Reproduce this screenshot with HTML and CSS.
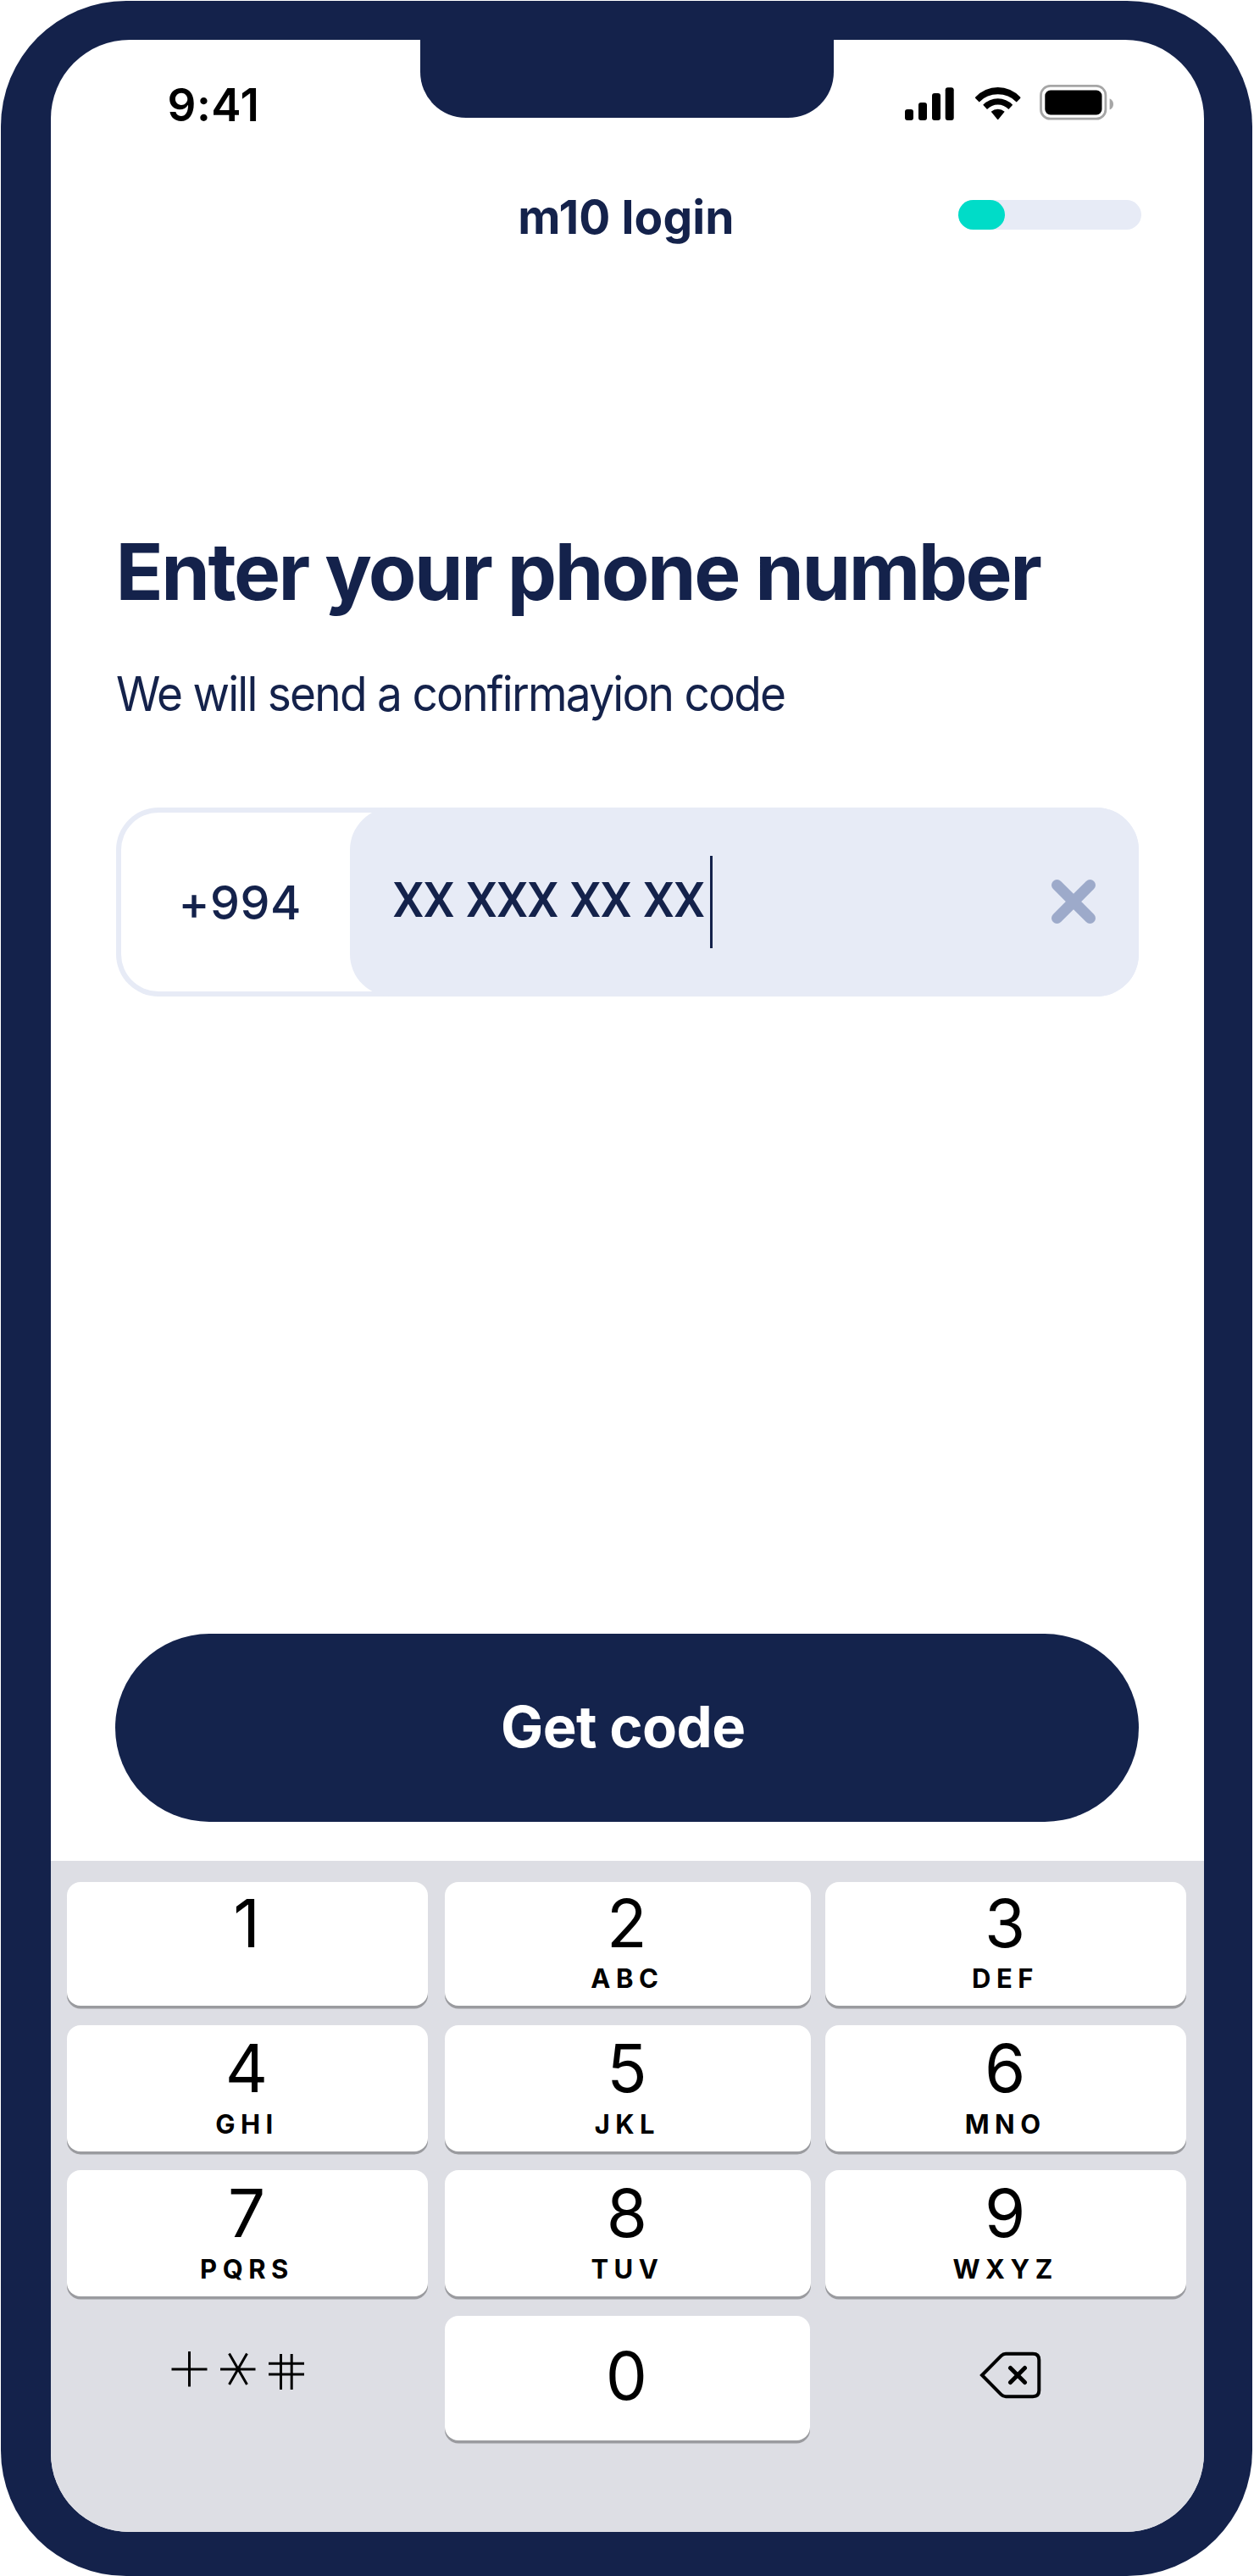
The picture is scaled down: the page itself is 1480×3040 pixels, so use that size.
FILE: index.html
```html
<!DOCTYPE html>
<html lang="en">
<head>
<meta charset="utf-8">
<title>m10 login</title>
<link rel="stylesheet" href="styles.css">
</head>
<body>
<div class="phone">
  <main class="screen">
    <div class="notch"></div>

    <div class="status-bar">
      <span class="time">9:41</span>
      <svg class="status-icons" width="248" height="44" viewBox="0 0 248 44">
        <g>
          <rect x="1" y="30" width="10" height="13" rx="3"/>
          <rect x="17" y="22" width="10" height="21" rx="3"/>
          <rect x="33" y="11" width="10" height="32" rx="3"/>
          <rect x="48.7" y="4.3" width="10" height="38.7" rx="3"/>
        </g>
        <g transform="translate(83.7 4)">
          <path d="M0.6 11.6A35.8 35.8 0 0 1 53.4 11.6Q54 12.2 53.5 12.9L49 17.4A31 31 0 0 0 5 17.4L0.5 12.9Q0 12.2 0.6 11.6Z"/>
          <path d="M9.5 20.7A24.5 24.5 0 0 1 44.5 20.7L39.7 26A17.6 17.6 0 0 0 14.3 26Z"/>
          <path d="M19 28.7A12.6 12.6 0 0 1 35 28.7L27.7 37.7Q27 38.6 26.3 37.7Z"/>
        </g>
        <rect x="161.5" y="2.4" width="76.4" height="38.8" rx="11" fill="none" stroke="#a6a6a6" stroke-width="2.8"/>
        <rect x="166.3" y="7.6" width="67.2" height="28.8" rx="6.5"/>
        <path d="M242.6 17.2Q247 19.4 247 23.9T242.6 30.6Z" fill="#a6a6a6"/>
      </svg>
    </div>

    <header class="header">
      <h2 class="title">m10 login</h2>
      <div class="progress"><div class="progress-fill"></div></div>
    </header>

    <section class="form">
      <h1 class="heading">Enter your phone number</h1>
      <p class="hint">We will send a confirmayion code</p>
      <div class="phone-field">
        <span class="prefix">+994</span>
        <div class="number">
          <span class="digits">XX XXX XX XX</span>
          <span class="caret"></span>
          <svg class="clear" width="54" height="54" viewBox="0 0 54 54">
            <path d="M7.5 7.5L46.5 46.5M46.5 7.5L7.5 46.5" fill="none" stroke="#9daaca" stroke-width="13" stroke-linecap="round"/>
          </svg>
        </div>
      </div>
    </section>

    <button class="submit">Get code</button>

    <div class="keypad">
      <div class="key"><b>1</b></div>
      <div class="key"><b>2</b><i>ABC</i></div>
      <div class="key"><b>3</b><i>DEF</i></div>
      <div class="key"><b>4</b><i>GHI</i></div>
      <div class="key"><b>5</b><i>JKL</i></div>
      <div class="key"><b>6</b><i>MNO</i></div>
      <div class="key"><b>7</b><i>PQRS</i></div>
      <div class="key"><b>8</b><i>TUV</i></div>
      <div class="key"><b>9</b><i>WXYZ</i></div>
      <div class="blank symbols">
        <svg width="158" height="48" viewBox="0 0 158 48" fill="none" stroke="#000" stroke-width="3">
          <path d="M0.5 23H42.5M21.5 2V43.5"/>
          <path d="M58 23H99.5M68.5 4.5L89.5 41M89.5 4.5L68.5 41"/>
          <path d="M115 16.3H157M115 29H157M129.5 5V47M142.2 5V47"/>
        </svg>
      </div>
      <div class="key zero"><b>0</b></div>
      <div class="blank erase">
        <svg width="73" height="56" viewBox="0 0 73 56" fill="none" stroke="#000">
          <path d="M3 28L25.6 5.2Q28 2.8 31 2.8H63Q70.3 2.8 70.3 10V46Q70.3 53.2 63 53.2H31Q28 53.2 25.6 50.8Z" stroke-width="4"/>
          <path d="M36.5 19.5L53.5 36.5M53.5 19.5L36.5 36.5" stroke-width="5" stroke-linecap="round"/>
        </svg>
      </div>
    </div>
  </main>
</div>
</body>
</html>
```
FILE: styles.css
```css
* { box-sizing: border-box; }

body {
  margin: 0;
  background: #fff;
  color: #14224b;
  font-family: Inter, "Liberation Sans", sans-serif;
}

h1, h2, p { margin: 0; }
svg { display: block; flex: none; }

.phone {
  width: 1477px;
  height: 3039px;
  margin: 1px 0 0 1px;
  padding: 46px 57px 52px 59px;
  border-radius: 148px;
  background: #14224b;
}

.screen {
  position: relative;
  display: flex;
  flex-direction: column;
  height: 2941px;
  border-radius: 93px;
  background: #fff;
  overflow: hidden;
}

/* camera cut-out laid over the top edge */
.notch {
  position: absolute;
  top: 0;
  left: 436px;
  width: 487.5px;
  height: 91.5px;
  border-radius: 0 0 54px 54px;
  background: #14224b;
}

.status-bar {
  display: flex;
  justify-content: space-between;
  align-items: center;
  height: 53px;
  margin-top: 51px;
  padding: 0 106px 0 137.5px;
  color: #000;
}

.time {
  font-size: 53px;
  font-weight: 600;
  line-height: 53px;
  letter-spacing: 0.5px;
}

.status-icons { margin-top: -7px; }

.header {
  display: grid;
  grid-template-columns: 1fr auto 1fr;
  align-items: center;
  height: 60px;
  margin-top: 74px;
  padding: 0 74px 0 76px;
}

.title {
  grid-column: 2;
  margin: 1px 5px 0 0;
  font-size: 55px;
  font-weight: 650;
  line-height: 60px;
  letter-spacing: 0.1px;
}

.progress {
  justify-self: end;
  width: 216px;
  height: 35px;
  margin-top: -4px;
  border-radius: 17.5px;
  background: #e7ebf6;
}

.progress-fill {
  width: 54.5px;
  height: 35px;
  border-radius: 17.5px;
  background: #00dcc8;
}

.form { padding: 0 76.5px; }

.heading {
  margin-top: 339px;
  font-size: 92.6px;
  font-weight: 700;
  line-height: 100px;
  letter-spacing: -2.5px;
  white-space: nowrap;
}

.hint {
  width: max-content;
  margin-top: 65px;
  font-size: 56px;
  line-height: 60px;
  letter-spacing: -1.85px;
  transform: scaleX(0.95);
  transform-origin: left;
}

.phone-field {
  display: flex;
  width: 1207.5px;
  height: 223px;
  margin-top: 103.7px;
  border-radius: 50px;
  background: #e7ebf6;
}

.prefix {
  flex: none;
  width: 320px;
  height: 211px;
  margin: 6px -50px 0 6px;
  padding-left: 68px;
  border-radius: 44px 0 0 44px;
  background: #fff;
  font-size: 55.5px;
  font-weight: 500;
  line-height: 211px;
  letter-spacing: 0.5px;
}

.number {
  display: flex;
  flex: 1;
  align-items: center;
  padding: 0 50px 0 51px;
  border-radius: 50px;
  background: #e7ebf6;
}

.digits {
  margin-top: -5px;
  font-family: Roboto, "Liberation Sans", sans-serif;
  font-size: 58px;
  font-weight: 500;
  line-height: 66px;
  letter-spacing: -0.4px;
  white-space: nowrap;
}

.caret {
  width: 3px;
  height: 109px;
  margin-left: 6px;
  background: #14224b;
}

.clear { margin-left: auto; }

.submit {
  flex: none;
  width: 1207.5px;
  height: 222.5px;
  margin: 752.3px 0 0 76px;
  padding: 0 9px 3px 0;
  border: 0;
  border-radius: 112px;
  background: #14234c;
  color: #fff;
  font-family: inherit;
  font-size: 67px;
  font-weight: 650;
  letter-spacing: -0.6px;
}

.keypad {
  display: grid;
  flex: 1;
  grid-template-columns: 428.3px 432.2px 425.2px;
  grid-template-rows: 146px 149px 149px 147px;
  gap: 22.6px 17.5px;
  margin-top: 45.5px;
  padding: 25px 0 0 19px;
  background: #dddee4;
  color: #000;
}

.key {
  display: flex;
  flex-direction: column;
  align-items: center;
  padding-top: 9px;
  border-radius: 16px;
  background: #fff;
  box-shadow: 0 3.5px 0 #9a9b9f;
}

.key:nth-child(3n + 1) { margin-right: 2.3px; }
.key:nth-child(-n + 3) { padding-top: 7px; }
.key.zero { margin-right: 1.3px; padding-top: 29px; }

.key b {
  margin-right: 2px;
  font-size: 78px;
  font-weight: 400;
  line-height: 84px;
}

.key i {
  margin: 5px 1px 0 0;
  font-size: 31px;
  font-style: normal;
  font-weight: 650;
  line-height: 38px;
  letter-spacing: 6.5px;
}

.key:nth-child(-n + 3) i { margin-top: 4px; }

.symbols { padding: 40px 0 0 123px; }
.erase { padding: 42.5px 0 0 182px; }
```
